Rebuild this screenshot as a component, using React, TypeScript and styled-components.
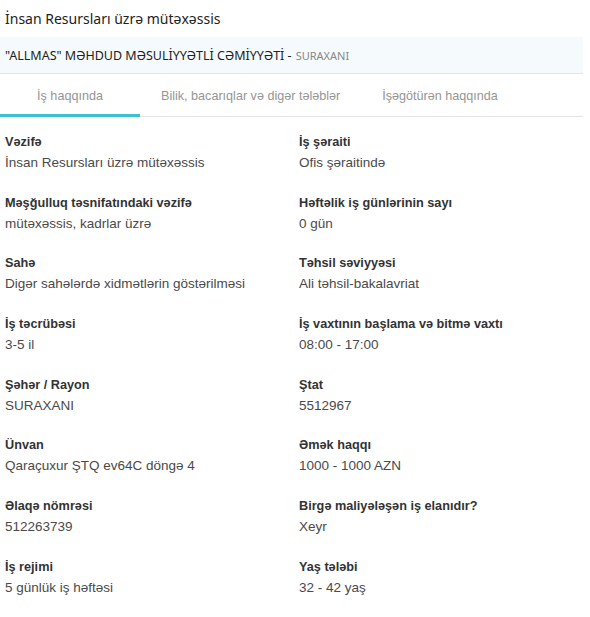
import React from "react";
import styled, { createGlobalStyle } from "styled-components";

const Global = createGlobalStyle`
  html, body { margin: 0; padding: 0; background: #fff; }
  body { font-family: "Liberation Sans", Arial, sans-serif; }
`;

const Page = styled.div`
  width: 583px;
  display: flex;
  flex-direction: column;
`;

const Title = styled.h1`
  margin: 0;
  padding: 9px 5px 0;
  height: 28px;
  font-family: "Noto Sans", "Open Sans", sans-serif;
  font-size: 14px;
  font-weight: 400;
  color: #222;
  line-height: 20px;
`;

const Band = styled.div`
  height: 36px;
  background: #f5fafd;
  border-bottom: 1px solid #e3e6e8;
  display: flex;
  align-items: center;
  padding: 0 5px;
  font-family: "Noto Sans", "Open Sans", sans-serif;
  font-size: 12.5px;
  color: #222;
`;

const Place = styled.span`
  font-size: 11px;
  color: #888;
  margin-left: 4px;
`;

const Tabs = styled.div`
  display: flex;
  height: 42px;
  border-bottom: 1px solid #e3e3e3;
`;

const Tab = styled.div<{ $active?: boolean; $wide?: boolean }>`
  display: flex;
  align-items: center;
  justify-content: center;
  padding: 3px 21px 0;
  min-width: ${(p) => (p.$wide ? "98px" : "0")};
  font-size: 12.6px;
  color: #959595;
  border-bottom: 3px solid ${(p) => (p.$active ? "#3fbfd4" : "transparent")};
  margin-bottom: -1px;
`;

const Grid = styled.div`
  display: grid;
  grid-template-columns: 294px 1fr;
  padding: 17px 5px 0;
  row-gap: 21.7px;
`;

const Field = styled.div`
  display: flex;
  flex-direction: column;
  gap: 3px;
`;

const Label = styled.div`
  font-size: 12.7px;
  font-weight: 700;
  color: #333;
  line-height: 16px;
`;

const Value = styled.div`
  font-size: 13.5px;
  color: #4a4a4a;
  line-height: 20px;
`;

const fields: [string, string][] = [
  ["Vəzifə", "İnsan Resursları üzrə mütəxəssis"],
  ["İş şəraiti", "Ofis şəraitində"],
  ["Məşğulluq təsnifatındaki vəzifə", "mütəxəssis, kadrlar üzrə"],
  ["Həftəlik iş günlərinin sayı", "0 gün"],
  ["Sahə", "Digər sahələrdə xidmətlərin göstərilməsi"],
  ["Təhsil səviyyəsi", "Ali təhsil-bakalavriat"],
  ["İş təcrübəsi", "3-5 il"],
  ["İş vaxtının başlama və bitmə vaxtı", "08:00 - 17:00"],
  ["Şəhər / Rayon", "SURAXANI"],
  ["Ştat", "5512967"],
  ["Ünvan", "Qaraçuxur ŞTQ ev64C döngə 4"],
  ["Əmək haqqı", "1000 - 1000 AZN"],
  ["Əlaqə nömrəsi", "512263739"],
  ["Birgə maliyələşən iş elanıdır?", "Xeyr"],
  ["İş rejimi", "5 günlük iş həftəsi"],
  ["Yaş tələbi", "32 - 42 yaş"],
];

export default function App() {
  return (
    <Page>
      <Global />
      <Title>İnsan Resursları üzrə mütəxəssis</Title>
      <Band>
        "ALLMAS" MƏHDUD MƏSULİYYƏTLİ CƏMİYYƏTİ -<Place>SURAXANI</Place>
      </Band>
      <Tabs>
        <Tab $active $wide>İş haqqında</Tab>
        <Tab>Bilik, bacarıqlar və digər tələblər</Tab>
        <Tab>İşəgötürən haqqında</Tab>
      </Tabs>
      <Grid>
        {fields.map(([l, v]) => (
          <Field key={l}>
            <Label>{l}</Label>
            <Value>{v}</Value>
          </Field>
        ))}
      </Grid>
    </Page>
  );
}
